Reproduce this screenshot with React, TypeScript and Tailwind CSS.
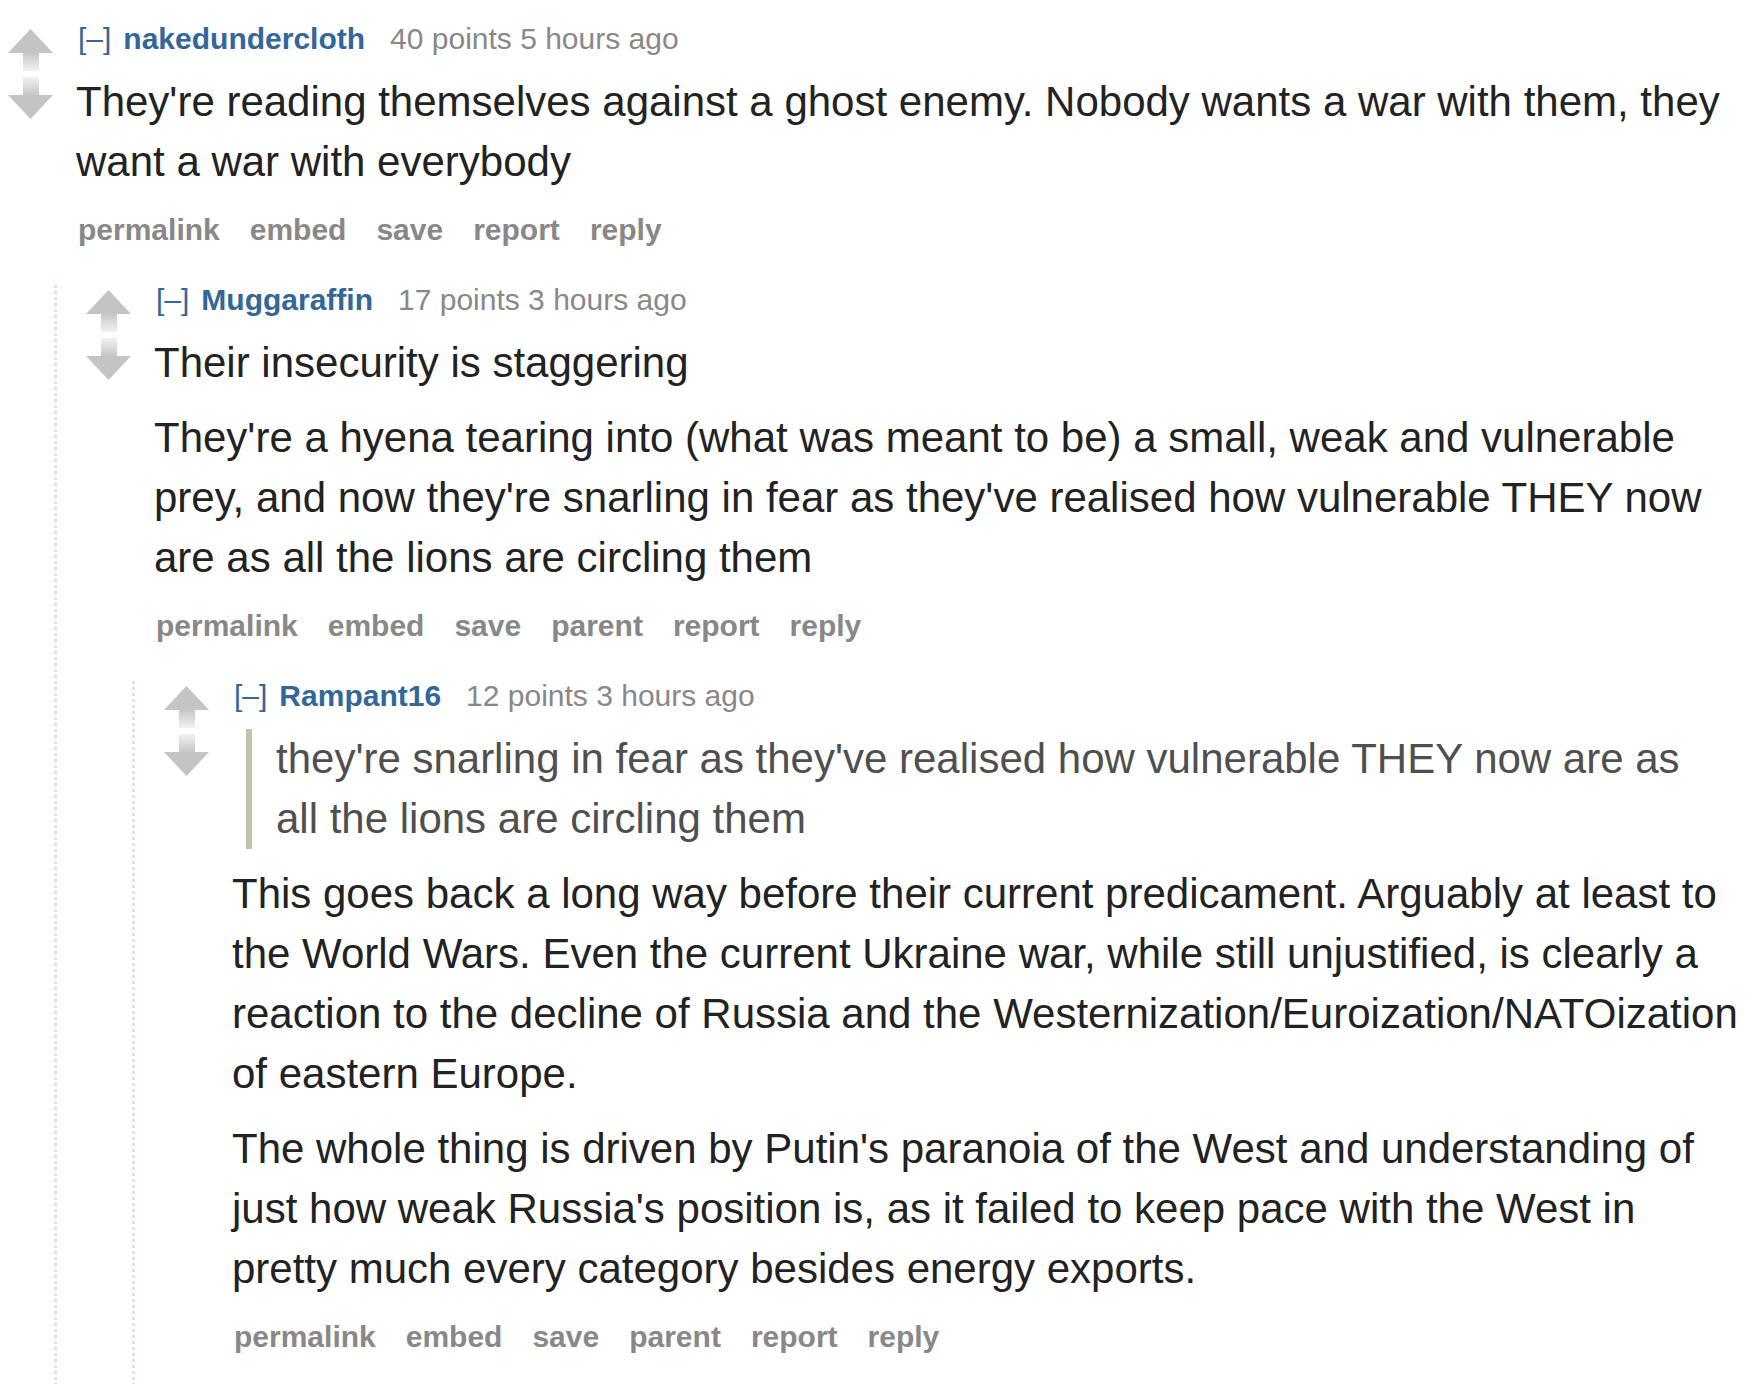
import { useId, type ReactNode } from "react";

const font = "font-['Liberation_Sans',Arial,Helvetica,sans-serif]";

function Arrow({ down }: { down?: boolean }) {
	const id = useId();
	return (
		<svg width="45" height="42" viewBox="0 0 45 42" className="block">
			<defs>
				<linearGradient id={id} x1="0" y1="0" x2="0" y2="1">
					<stop offset="0" stopColor={down ? "#f2f2f2" : "#c4c4c4"} />
					<stop offset="1" stopColor={down ? "#c4c4c4" : "#f2f2f2"} />
				</linearGradient>
			</defs>
			{down ? (
				<>
					<rect x="15" y="0" width="16" height="19" fill={`url(#${id})`} />
					<polygon points="0,18 45,18 22.5,42" fill="#c4c4c4" />
				</>
			) : (
				<>
					<polygon points="22.5,0 45,24 0,24" fill="#c4c4c4" />
					<rect x="15" y="23" width="16" height="19" fill={`url(#${id})`} />
				</>
			)}
		</svg>
	);
}

function Comment({
	author,
	meta,
	buttons,
	children,
	replies,
}: {
	author: string;
	meta: string;
	buttons: string[];
	children: ReactNode;
	replies?: ReactNode;
}) {
	return (
		<div>
			<div className="flex">
				<div className="ml-[8px] mt-[5px] flex w-[45px] shrink-0 flex-col gap-[6px]">
					<Arrow />
					<Arrow down />
				</div>
				<div className="ml-[23px] min-w-0 flex-1">
					<div className="whitespace-nowrap pl-[2px] text-[30px] leading-[30px]">
						<span className="mr-[12px] text-[#336699]">[–]</span>
						<span className="mr-[25px] font-bold text-[#336699]">{author}</span>
						<span className="text-[#888888]">{meta}</span>
					</div>
					<div className="mt-[18px] text-[42px] leading-[60px] text-[#222222]">
						{children}
					</div>
					<div className="flex gap-[30px] pl-[2px] pt-[8px] text-[30px] font-bold leading-[30px] text-[#888888]">
						{buttons.map((b) => (
							<span key={b}>{b}</span>
						))}
					</div>
				</div>
			</div>
			{replies && (
				<div className="ml-[54px] mt-[40px] flex">
					<div className="w-[3px] shrink-0 bg-[linear-gradient(to_bottom,#ddddff_50%,transparent_50%)] bg-[length:3px_6px] bg-repeat-y" />
					<div className="min-w-0 flex-1 pl-[21px]">{replies}</div>
				</div>
			)}
		</div>
	);
}

export default function App() {
	return (
		<div className={`${font} h-[1384px] overflow-hidden bg-white pr-[8px] pt-[24px]`}>
			<Comment
				author="nakedundercloth"
				meta="40 points 5 hours ago"
				buttons={["permalink", "embed", "save", "report", "reply"]}
				replies={
					<Comment
						author="Muggaraffin"
						meta="17 points 3 hours ago"
						buttons={["permalink", "embed", "save", "parent", "report", "reply"]}
						replies={
							<>
								<Comment
									author="Rampant16"
									meta="12 points 3 hours ago"
									buttons={["permalink", "embed", "save", "parent", "report", "reply"]}
								>
									<blockquote className="mb-[15px] ml-[14px] border-l-[6px] border-[#c5c1ad] px-[24px] text-[#4f4f4f]">
										<p>
											they're snarling in fear as they've realised how vulnerable THEY now are as all
											the lions are circling them
										</p>
									</blockquote>
									<p className="mb-[15px]">
										This goes back a long way before their current predicament. Arguably at least to
										the World Wars. Even the current Ukraine war, while still unjustified, is clearly a
										reaction to the decline of Russia and the Westernization/Euroization/NATOization of
										eastern Europe.
									</p>
									<p className="mb-[15px]">
										The whole thing is driven by Putin's paranoia of the West and understanding of just
										how weak Russia's position is, as it failed to keep pace with the West in pretty much
										every category besides energy exports.
									</p>
								</Comment>
								<div className="h-[80px]" />
							</>
						}
					>
						<p className="mb-[15px]">Their insecurity is staggering</p>
						<p className="mb-[15px]">
							They're a hyena tearing into (what was meant to be) a small, weak and vulnerable prey, and
							now they're snarling in fear as they've realised how vulnerable THEY now are as all the
							lions are circling them
						</p>
					</Comment>
				}
			>
				<p className="mb-[15px]">
					They're reading themselves against a ghost enemy. Nobody wants a war with them, they want a war
					with everybody
				</p>
			</Comment>
		</div>
	);
}
